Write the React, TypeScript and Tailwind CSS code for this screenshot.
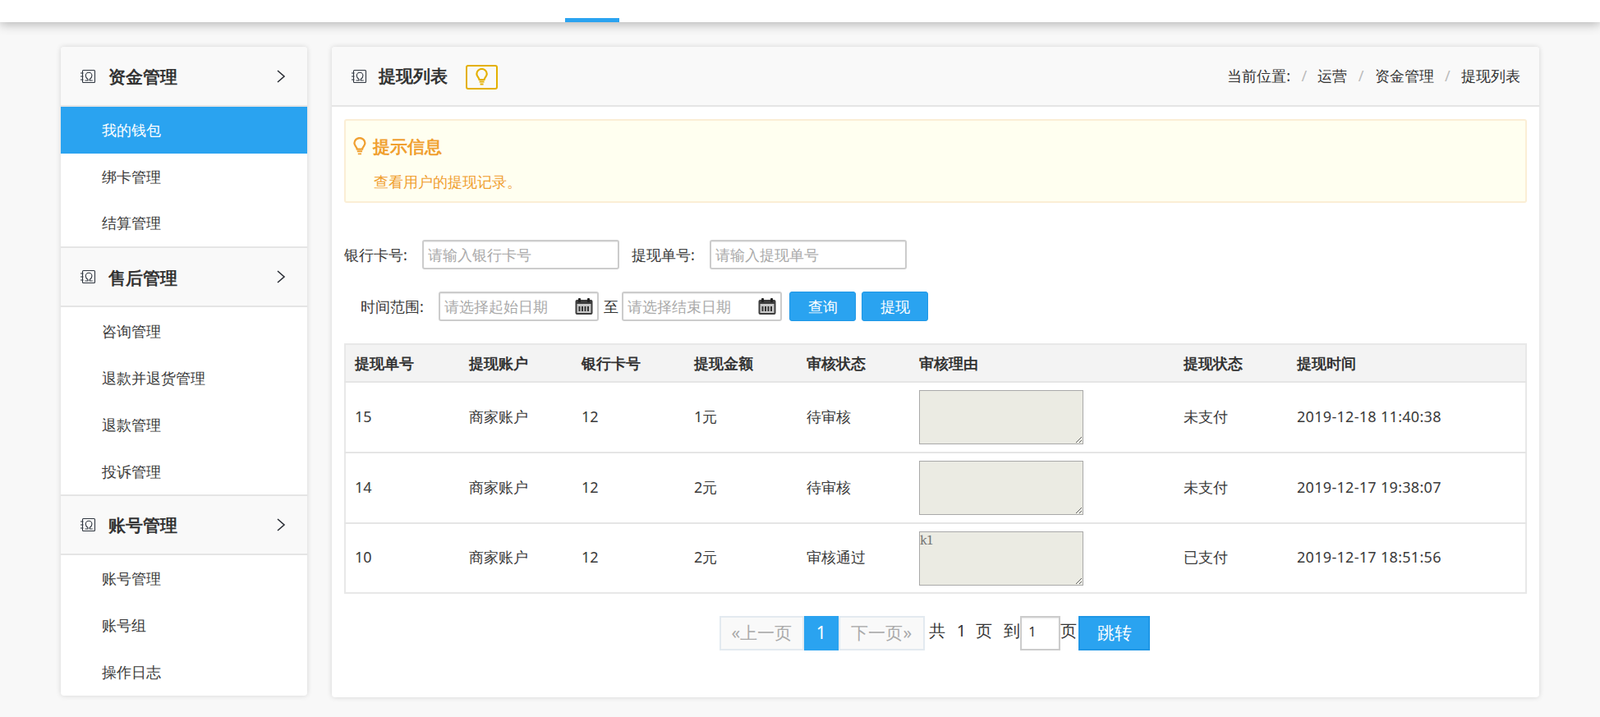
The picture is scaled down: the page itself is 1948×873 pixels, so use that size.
const FONT = "font-['Noto_Sans','Noto_Sans_CJK_SC',sans-serif]";

const BookIcon = () => (
  <svg width="20" height="18" viewBox="0 0 20 18" fill="none" className="shrink-0">
    <rect x="3.500" y="1.500" width="15" height="15" rx="1" stroke="#2f3640" strokeWidth="1.100" />
    <path d="M1 5h3.500M1 9h3.500M1 13h3.500" stroke="#2f3640" strokeWidth="1.100" />
    <path
      d="M6.500 14h3.500v-1.500C8.300 11.500 7.300 9.800 7.300 8a3.800 3.800 0 0 1 7.600 0c0 1.800-1 3.500-2.700 4.500V14h3.500"
      stroke="#2f3640"
      strokeWidth="1.100"
    />
  </svg>
);

const Chevron = () => (
  <svg width="12" height="16" viewBox="0 0 12 16" fill="none">
    <path d="M2 1l8 7-8 7" stroke="#2b2f36" strokeWidth="1.600" />
  </svg>
);

const Bulb = ({ color, size = 20 }: { color: string; size?: number }) => (
  <svg width={size * 0.72} height={size} viewBox="0 0 15 21" fill="none" className="shrink-0">
    <path
      d="M4.500 14C4.200 11.300 1.300 10 1.300 7a6.200 6 0 0 1 12.400 0c0 3-2.900 4.300-3.200 7z"
      stroke={color}
      strokeWidth="2.200"
    />
    <path d="M4.500 16.500h6M5.500 19.500h4" stroke={color} strokeWidth="1.800" />
  </svg>
);

const CalendarIcon = () => (
  <svg width="22" height="20" viewBox="0 0 22 20" className="shrink-0">
    <rect x="0.500" y="2" width="21" height="18" rx="2" fill="#3d3d3d" />
    <rect x="4" y="0" width="3" height="5" rx="1" fill="#222" />
    <rect x="15" y="0" width="3" height="5" rx="1" fill="#222" />
    <rect x="2.500" y="7" width="17" height="11" fill="#c9c9c9" />
    <path d="M5.500 10v6M9 10v6M12.500 10v6M16 10v6" stroke="#333" strokeWidth="2" />
  </svg>
);

const groups = [
  { title: "资金管理", items: ["我的钱包", "绑卡管理", "结算管理"] },
  { title: "售后管理", items: ["咨询管理", "退款并退货管理", "退款管理", "投诉管理"] },
  { title: "账号管理", items: ["账号管理", "账号组", "操作日志"] },
];

const columns = ["提现单号", "提现账户", "银行卡号", "提现金额", "审核状态", "审核理由", "提现状态", "提现时间"];

const rows = [
  { id: "15", amount: "1元", audit: "待审核", reason: "", pay: "未支付", time: "2019-12-18 11:40:38", height: "h-[86px]" },
  { id: "14", amount: "2元", audit: "待审核", reason: "", pay: "未支付", time: "2019-12-17 19:38:07", height: "h-[86px]" },
  { id: "10", amount: "2元", audit: "审核通过", reason: "k1", pay: "已支付", time: "2019-12-17 18:51:56", height: "h-[85px]" },
];

const Sidebar = () => (
  <aside className="w-[300px] h-[790px] shrink-0 bg-white rounded-[4px] shadow-[0_0_6px_rgba(0,0,0,0.15)] overflow-hidden">
    {groups.map((g, i) => (
      <div key={g.title} className={i > 0 ? "border-t-2 border-[#e5e5e5]" : ""}>
        <div
          className={`${
            i > 0 ? "h-[72px]" : "h-[73px]"
          } flex items-center pl-[23px] pr-[26px] bg-[#f9f9f9] border-b-2 border-[#e5e5e5]`}
        >
          <BookIcon />
          <span className="ml-[15px] pt-[2px] text-[21px] font-bold text-[#333]">{g.title}</span>
          <span className="ml-auto flex">
            <Chevron />
          </span>
        </div>
        {g.items.map((item) => (
          <div
            key={item}
            className={`h-[56.800px] flex items-center pl-[50px] text-[18px] ${i > 0 ? "pt-[2px]" : ""} ${
              item === "我的钱包" ? "bg-[#2aa3f0] text-white" : "text-[#3a3a3a]"
            }`}
          >
            {item}
          </div>
        ))}
      </div>
    ))}
  </aside>
);

const Breadcrumb = () => (
  <div className="ml-auto flex items-center text-[18px] text-[#333]">
    <span>当前位置:</span>
    {["运营", "资金管理", "提现列表"].map((b) => (
      <span key={b} className="flex items-center">
        <span className="w-[33.300px] text-center text-[#bbb]">/</span>
        <span>{b}</span>
      </span>
    ))}
  </div>
);

const TextField = ({ placeholder, width }: { placeholder: string; width: string }) => (
  <input
    placeholder={placeholder}
    className={`${width} h-[36px] px-[5px] text-[18px] border-2 border-[#ccc] rounded-[3px] shadow-[inset_0_1px_1px_rgba(0,0,0,0.08)] placeholder:text-[#aaa] outline-none`}
  />
);

const DateField = ({ placeholder }: { placeholder: string }) => (
  <div className="w-[195px] h-[36px] flex items-center px-[5px] border-2 border-[#ccc] rounded-[3px] shadow-[inset_0_1px_1px_rgba(0,0,0,0.08)]">
    <input placeholder={placeholder} className="w-full min-w-0 text-[18px] placeholder:text-[#aaa] outline-none" />
    <CalendarIcon />
  </div>
);

const Pagination = () => (
  <div className="mt-[27px] pr-[2px] flex justify-center text-[20px] text-[#333]">
    <span className="w-[103px] h-[42px] flex items-center justify-center bg-[#f9f9f9] border-2 border-[#e3eaf0] text-[21px] text-[#aaa]">
      «上一页
    </span>
    <span className="w-[42px] h-[42px] flex items-center justify-center bg-[#2aa3f0] text-[21px] text-white">1</span>
    <span className="w-[105px] h-[42px] flex items-center justify-center bg-[#f9f9f9] border-2 border-[#e3eaf0] text-[21px] text-[#aaa]">
      下一页»
    </span>
    <span className="ml-[5px] h-[36px] flex items-center">共</span>
    <span className="ml-[14px] h-[36px] flex items-center">1</span>
    <span className="ml-[12px] h-[36px] flex items-center">页</span>
    <span className="ml-[14px] h-[36px] flex items-center">到</span>
    <input
      defaultValue="1"
      className="w-[49px] h-[42px] pl-[8px] pb-[4px] text-[16px] border-2 border-[#ccc] shadow-[inset_0_1px_2px_rgba(0,0,0,0.1)] outline-none"
    />
    <span className="mr-[2px] h-[36px] flex items-center">页</span>
    <button className="w-[87px] h-[42px] bg-[#2aa3f0] border-2 border-[#1f97e6] text-[21px] text-white">跳转</button>
  </div>
);

const App = () => {
  return (
    <div className={`h-[873px] bg-[#f8f8f8] overflow-hidden ${FONT}`}>
      <div className="h-[27px] bg-white flex items-end shadow-[0_2px_14px_rgba(0,0,0,0.3)] relative">
        <div className="ml-[688px] w-[66px] h-[5px] bg-[#2aa3f0]" />
      </div>

      <div className="mt-[30px] ml-[74px] flex gap-[30px] items-start">
        <Sidebar />

        <main className="w-[1470px] h-[792px] shrink-0 bg-white rounded-[4px] shadow-[0_0_6px_rgba(0,0,0,0.15)] overflow-hidden">
          <div className="h-[73px] flex items-center pl-[23px] pr-[23px] bg-[#f9f9f9] border-b-2 border-[#e5e5e5]">
            <BookIcon />
            <span className="ml-[14px] text-[21px] font-bold text-[#333]">提现列表</span>
            <span className="ml-[22px] mt-[2px] w-[39px] h-[30px] flex items-center justify-center border-2 border-[#e4b000] rounded-[3px]">
              <Bulb color="#e4b000" size={21} />
            </span>
            <Breadcrumb />
          </div>

          <div className="px-[15px] pt-[15px]">
            <div className="h-[102px] bg-[#fffff0] border-2 border-[#fbeed5] rounded-[3px] text-[#f0a030] pl-[9px]">
              <div className="mt-[16px] flex items-center">
                <Bulb color="#f0a030" size={22} />
                <span className="ml-[8px] text-[21px] font-bold leading-[30px]">提示信息</span>
              </div>
              <div className="mt-[13px] pl-[25px] text-[18px] leading-[30px]">查看用户的提现记录。</div>
            </div>

            <div className="mt-[45px] flex items-center text-[18px] text-[#3a3a3a]">
              <span className="w-[95px]">银行卡号:</span>
              <TextField placeholder="请输入银行卡号" width="w-[240px]" />
              <span className="ml-[15px] w-[95px]">提现单号:</span>
              <TextField placeholder="请输入提现单号" width="w-[240px]" />
            </div>

            <div className="mt-[27px] flex items-center text-[18px] text-[#3a3a3a]">
              <span className="ml-[20px] w-[95px]">时间范围:</span>
              <DateField placeholder="请选择起始日期" />
              <span className="ml-[6px] mr-[4px] text-[#333]">至</span>
              <DateField placeholder="请选择结束日期" />
              <button className="ml-[9px] w-[81px] h-[36px] bg-[#2aa3f0] border border-[#1f97e6] rounded-[3px] text-white">
                查询
              </button>
              <button className="ml-[7px] w-[81px] h-[36px] bg-[#2aa3f0] border border-[#1f97e6] rounded-[3px] text-white">
                提现
              </button>
            </div>

            <table className="mt-[27px] w-[1440px] table-fixed border-2 border-[#e8e8e8] text-[18px] text-[#3a3a3a]">
              <colgroup>
                <col className="w-[140px]" />
                <col className="w-[137px]" />
                <col className="w-[137px]" />
                <col className="w-[137px]" />
                <col className="w-[137px]" />
                <col className="w-[322px]" />
                <col className="w-[138px]" />
                <col />
              </colgroup>
              <thead>
                <tr className="h-[46px] bg-[#f3f3f3] border-b-2 border-[#e5e5e5]">
                  {columns.map((c) => (
                    <th key={c} className="pl-[11px] text-left font-bold text-[#333]">
                      {c}
                    </th>
                  ))}
                </tr>
              </thead>
              <tbody>
                {rows.map((r, i) => (
                  <tr key={r.id} className={`${r.height} ${i < 2 ? "border-b-2 border-[#e5e5e5]" : ""}`}>
                    <td className="pl-[11px] pb-[2px]">{r.id}</td>
                    <td className="pl-[11px] pb-[2px]">商家账户</td>
                    <td className="pl-[11px] pb-[2px]">12</td>
                    <td className="pl-[11px] pb-[2px]">{r.amount}</td>
                    <td className="pl-[11px] pb-[2px]">{r.audit}</td>
                    <td className="pl-[11px]">
                      <textarea
                        readOnly
                        defaultValue={r.reason}
                        className="block w-[200px] h-[66px] bg-[#ebebe3] border border-[#a9a9a9] text-[17px] leading-[20px] text-[#777] font-serif"
                      />
                    </td>
                    <td className="pl-[11px] pb-[2px]">{r.pay}</td>
                    <td className="pl-[11px] pb-[2px] tracking-[0.3px]">{r.time}</td>
                  </tr>
                ))}
              </tbody>
            </table>

            <Pagination />
          </div>
        </main>
      </div>
    </div>
  );
};

export default App;
